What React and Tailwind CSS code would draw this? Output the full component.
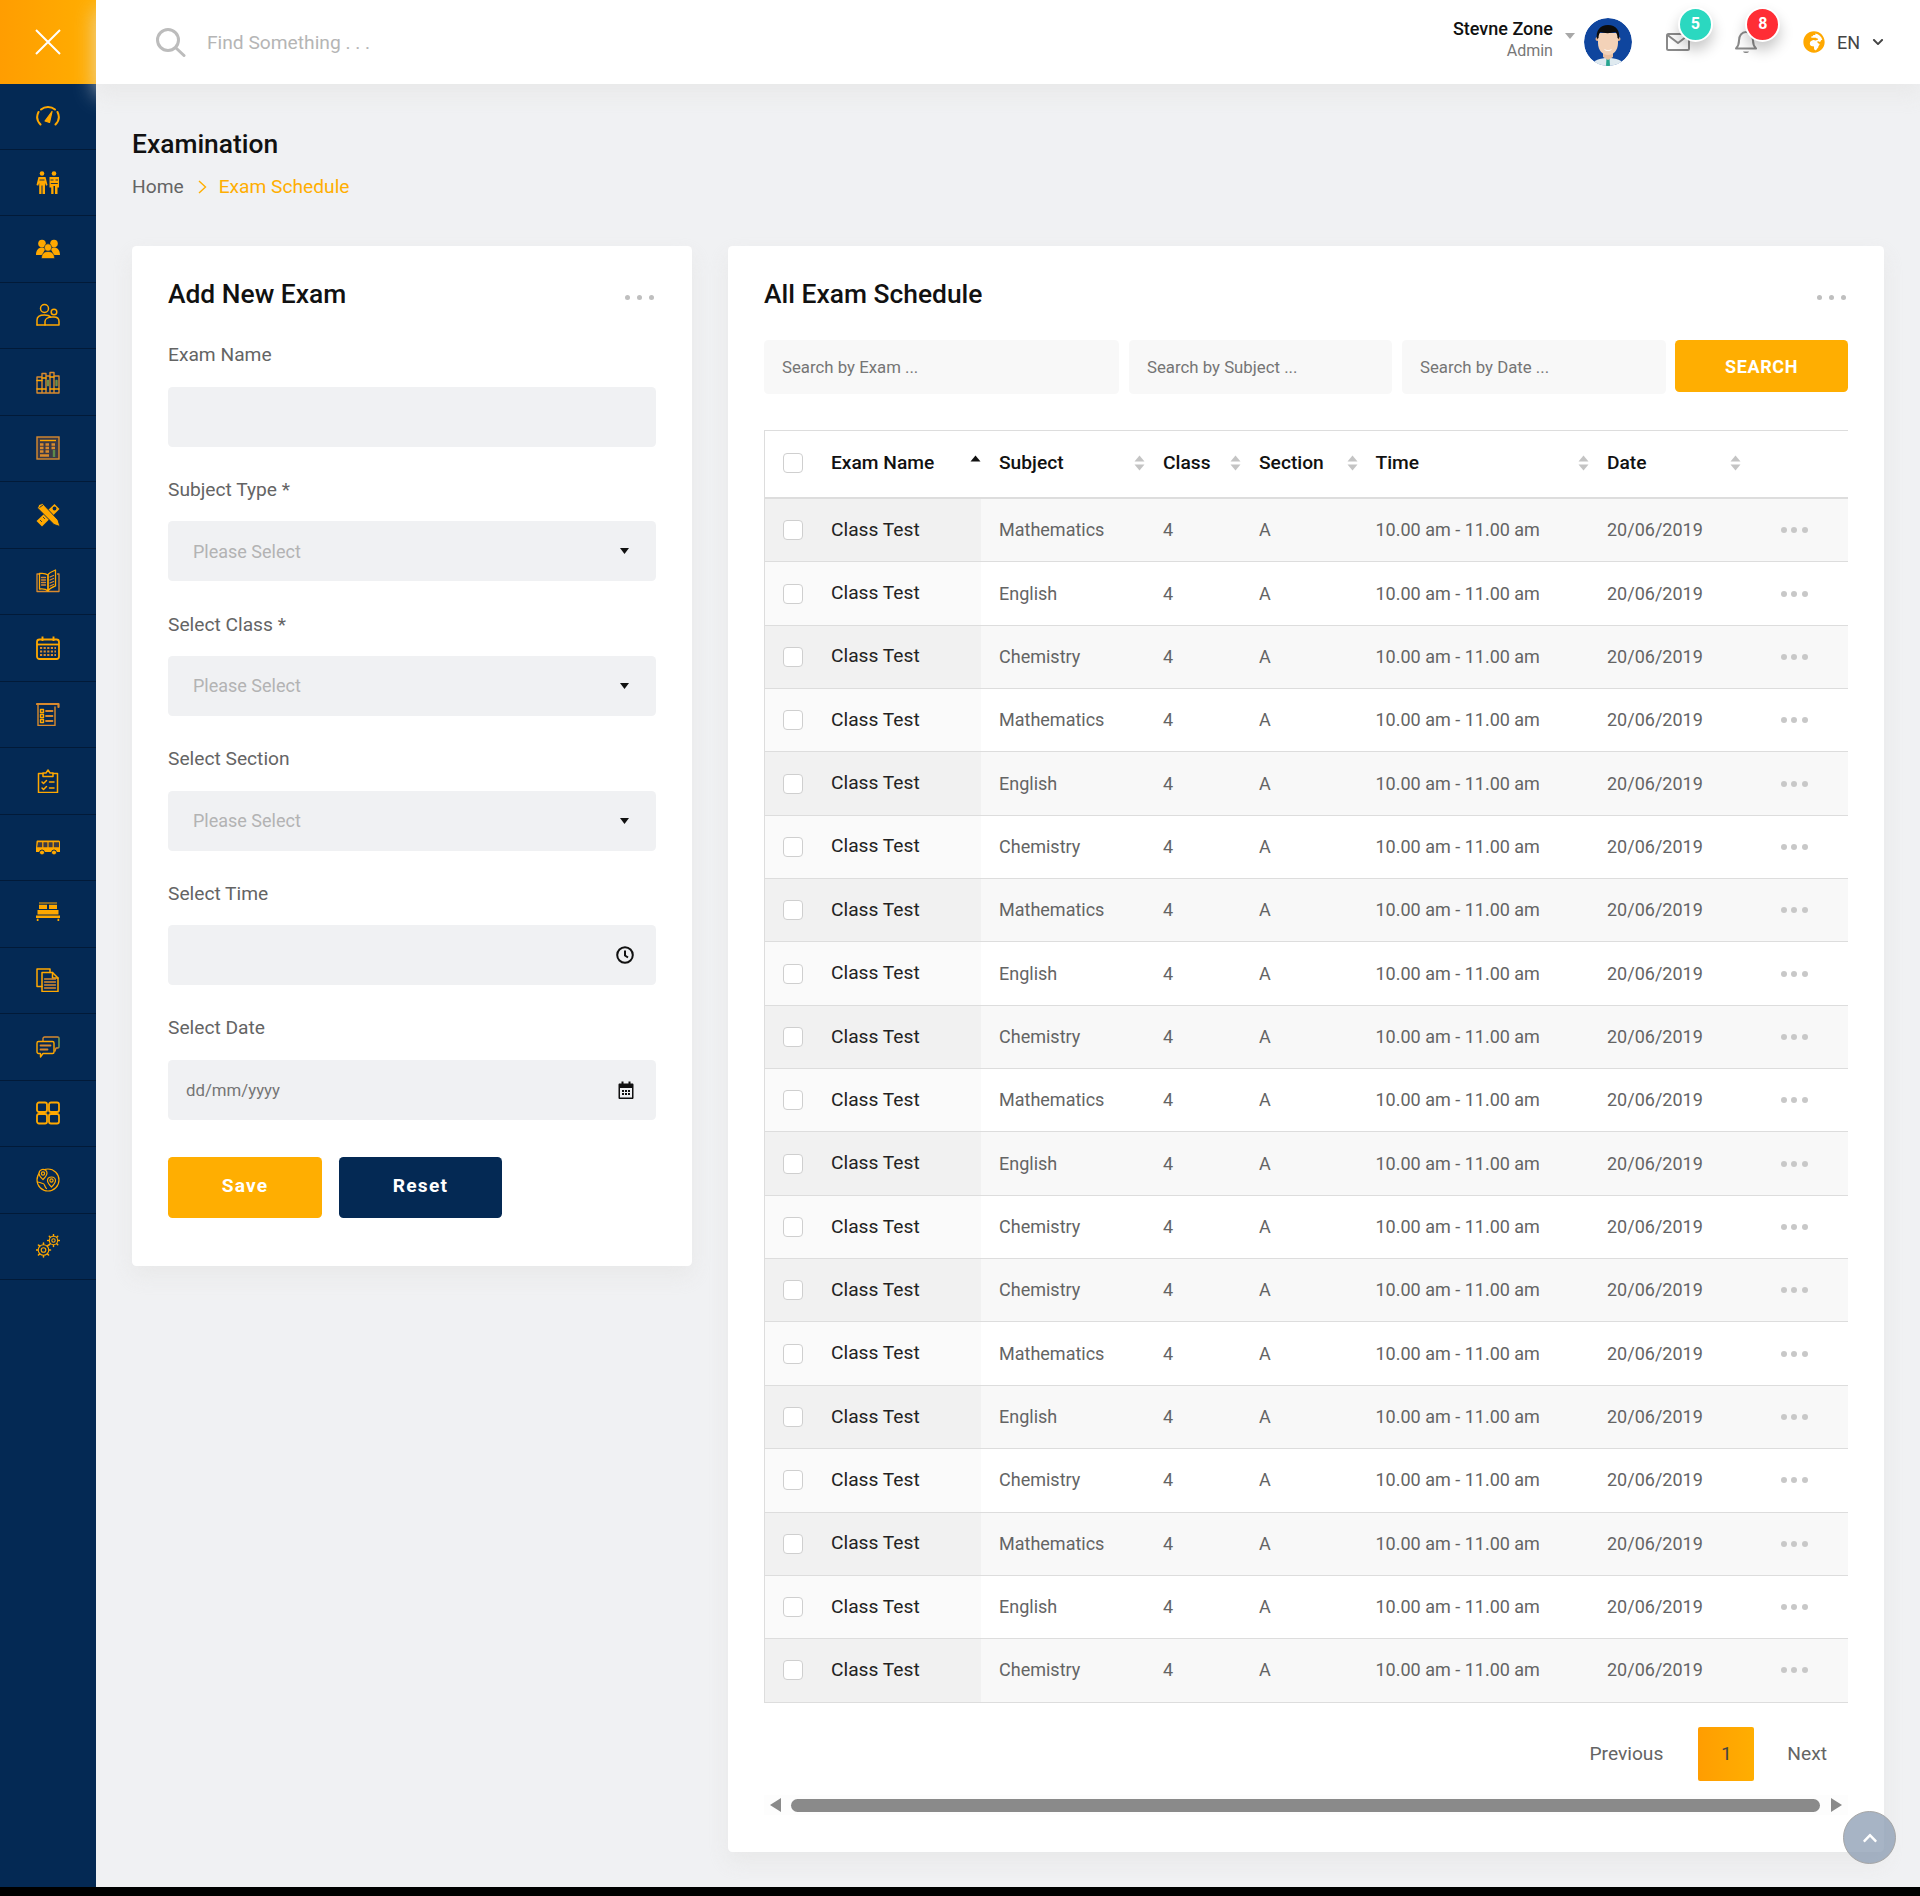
import React from 'react';
import { FaGlobeAfrica, FaChevronDown, FaChevronUp } from 'react-icons/fa';

const subjects = ['Mathematics', 'English', 'Chemistry', 'Mathematics', 'English', 'Chemistry', 'Mathematics', 'English', 'Chemistry', 'Mathematics', 'English', 'Chemistry', 'Chemistry', 'Mathematics', 'English', 'Chemistry', 'Mathematics', 'English', 'Chemistry'];

const O = '#ffa800';
const M = '#d98a2e';

// sidebar icons, all drawn on a 24 box
const Line = ({ children, w = 1.5 }) => (
  <svg viewBox="0 0 24 24" className="w-6 h-6" fill="none" stroke={O} strokeWidth={w} strokeLinecap="round" strokeLinejoin="round">
    {children}
  </svg>
);

const sideIcons = [
  <Line key="gauge" w={2}>
    <path d="M4.500 20.500C1 17 .5 12 2.500 8" />
    <path d="M5 5.500C9 2 15 2 19 5.500" />
    <path d="M21.500 8c2 4 1.500 9-2 12.500" />
    <path d="M9 17l7-9.500-2.500 11z" fill={O} strokeWidth="1.200" />
  </Line>,
  <svg key="students" viewBox="0 0 24 24" className="w-6 h-6" fill={O}>
    <circle cx="6" cy="3.500" r="2.300" />
    <circle cx="18" cy="3.500" r="2.300" />
    <path d="M2.500 7h7l2 8-1.500.8-1-2.800V24H6.500v-8.500h-1V24H3.200V13l-1 2.800L.5 15z" />
    <path d="M13.500 7h9.500v10.500h-1.500V24H19v-8h-1.500v8h-2.300v-6.500h-1.700z" />
    <path d="M3.500 10h5M14.500 10h3M19.500 10h2.500M14.800 13.500h7" stroke="#042954" strokeWidth=".9" />
  </svg>,
  <svg key="group" viewBox="0 0 24 24" className="w-6 h-6" fill={O}>
    <circle cx="6" cy="6.500" r="3.800" />
    <circle cx="18" cy="6.500" r="3.800" />
    <path d="M0 18c0-5 2.500-7.500 6-7.500 1.500 0 3 .5 4 1.500-2 1.500-3 3.500-3 6z" />
    <path d="M24 18c0-5-2.500-7.500-6-7.500-1.500 0-3 .5-4 1.500 2 1.500 3 3.500 3 6z" />
    <circle cx="12" cy="10.500" r="3.700" stroke="#042954" strokeWidth=".6" />
    <path d="M5.500 21.500c0-5 2.500-7 6.500-7s6.500 2 6.500 7z" stroke="#042954" strokeWidth=".6" />
  </svg>,
  <Line key="parents">
    <circle cx="8.500" cy="5.500" r="4" />
    <circle cx="18" cy="9" r="2.800" />
    <path d="M1 22v-5c0-3 2.500-5 7.500-5 3 0 5 .8 6 2" />
    <path d="M9 22v-3.500c0-2.500 3-4.500 7.500-4.500H18c3 0 5 1.500 5 4.500V22z" />
    <path d="M1 22h8" />
  </Line>,
  <Line key="books" w={1.400}>
    <path d="M1 7h5v16H1zM6 3.500h4V23H6zM10 6h4v17h-4zM14 2.500h4V23h-4zM18 6h5v17h-5z" stroke={M} />
    <path d="M1 10.500h5M1 19h5M6 8h4M6 19h4M14 7h4M14 19h4M18 19h5" stroke={O} />
    <path d="M11.500 10.500h1v5h-1zM20 10.500h1v5h-1z" stroke="#6f8f48" />
  </Line>,
  <svg key="calc" viewBox="0 0 24 24" className="w-6 h-6" fill="none" stroke={O} strokeWidth="1.400">
    <rect x="1" y="1" width="22" height="22" stroke={M} fill="#3a3a48" />
    <path d="M4 4.500h16" />
    <path d="M4 8.500h3.500M9.500 8.500H13M15.500 8.500H19M4 12h3.500M9.500 12H13M15.500 12H19M4 15.500h3.500M9.500 15.500H13M4 19.500h9" stroke={M} strokeWidth="2.400" />
    <path d="M18 14v7" stroke="#5d8a4a" strokeWidth="2.400" />
  </svg>,
  <svg key="tools" viewBox="0 0 24 24" className="w-6 h-6" fill={O}>
    <path d="M18.500 1l5 5L6 23.500 .5 18z" />
    <path d="M3 1.500L6.500.5 22 17l2 6.500-6-2L1.500 5z" stroke="#042954" strokeWidth=".9" />
    <circle cx="18.500" cy="5.500" r="1.900" fill="#042954" />
    <path d="M3.500 4.500l3.500-2.500" stroke="#042954" strokeWidth=".9" />
    <path d="M4 17l2 2M7 14l2 2" stroke="#042954" strokeWidth=".8" />
  </svg>,
  <Line key="book" w={1.300}>
    <path d="M3 5H1v17.500h22V5h-1.500" stroke={M} />
    <path d="M12 22V6C10 4.500 7 4 3.500 4.500V20c3.500-.5 6.500 0 8.500 2z" />
    <path d="M12 22V5.500c2.500-2.500 5-3.500 7.500-4.500v16c-2.500 1-5.500 2-7.500 5z" />
    <path d="M5.500 8.500h4M5.500 11h4M5.500 13.500h4M5.500 16h4M14 8l3.500-1.500M14 11l3.500-1.500M14 14l3.500-1.500M14 17l3.500-1.500" stroke={M} />
  </Line>,
  <svg key="calendar" viewBox="0 0 24 24" className="w-6 h-6" fill="none" stroke={O} strokeWidth="1.800">
    <rect x="1" y="3.500" width="22" height="19.500" rx="2.500" />
    <path d="M1 8.500h22" />
    <path d="M6.500 .5v4.500M17.500 .5v4.500" strokeWidth="1.900" />
    <path d="M4 12h16M4 15.500h16M4 19h16" strokeWidth="2.200" strokeDasharray="2.200 1.400" stroke={M} />
  </svg>,
  <Line key="list" w={1.400}>
    <path d="M1 2h21.500V5" stroke={M} strokeWidth="2.200" />
    <path d="M2 3v20.500h17V5" stroke={M} />
    <path d="M4.500 7.500h3v3h-3zM4.500 12.500h3v3h-3zM4.500 17.500h3v3h-3z" />
    <path d="M10 9h6.500M10 14h6.500M10 19h6.500" strokeWidth="1.800" stroke={M} />
  </Line>,
  <Line key="clipboard" w={1.500}>
    <path d="M7 4.500H2.500v19h19v-19H17" />
    <path d="M7 7.500h10V4h-3l-2-3-2 3H7z" />
    <path d="M6 13l1.500 1.500 3-3M6 19l1.500 1.500 3-3" />
    <path d="M13.500 13h4.500M13.500 19h4.500" />
  </Line>,
  <svg key="bus" viewBox="0 0 24 24" className="w-6 h-6">
    <path d="M1.500 5.500h21c.5 0 1.500 .5 1.500 1V17H0v-4l.5-6.500c0-.5.5-1 1-1z" fill={O} />
    <path d="M2 7.200h4.200v5H1.200zM7.400 7.200h4v5h-4zM12.600 7.200h4v5h-4zM17.800 7.200h5.200v5h-5.200z" fill="#3a3a48" />
    <circle cx="6" cy="17.500" r="2.500" fill={O} stroke="#042954" />
    <circle cx="18" cy="17.500" r="2.500" fill={O} stroke="#042954" />
  </svg>,
  <svg key="bed" viewBox="0 0 24 24" className="w-6 h-6" fill={O}>
    <path d="M3 .5h18v1.100H3zM3 2.800h8V7H3zM13 2.800h8V7h-8zM1.500 8h21v4.500h-21zM0 13.500h24V16H0zM.8 16.800h1.700V19H.8zM21.500 16.800h1.700V19h-1.700z" />
  </svg>,
  <Line key="docs" w={1.500}>
    <path d="M14 4.500V1H1v17.500h5" />
    <path d="M6 4.500h10.500L22 10v13.500H6z" />
    <path d="M16.500 4.500V10H22" />
    <path d="M8.500 11h11M8.500 14h11M8.500 17h11M8.500 20h11" strokeWidth="1.300" stroke={M} />
  </Line>,
  <Line key="chat" w={1.400}>
    <path d="M7 6V3.500C7 2.700 7.700 2 8.500 2h13C22.300 2 23 2.700 23 3.500v8c0 .8-.7 1.500-1.500 1.500H20l-1 3" stroke={M} />
    <path d="M23 3v9" stroke="#3d8a5a" />
    <path d="M2.500 6.500h14c.8 0 1.500.7 1.500 1.500v9c0 .8-.7 1.500-1.500 1.500H7L4.500 22v-3.500h-2C1.700 18.500 1 17.800 1 17V8c0-.8.7-1.500 1.500-1.500z" />
    <path d="M4.500 10.500h10M4.500 14.500h7" stroke={M} strokeWidth="1.800" />
  </Line>,
  <Line key="grid" w={1.800}>
    <rect x="1" y="1.500" width="10" height="9.500" rx="2" />
    <rect x="13" y="1.500" width="10" height="9.500" rx="2" />
    <rect x="1" y="13" width="10" height="9.500" rx="2" />
    <rect x="13" y="13" width="10" height="9.500" rx="2" />
  </Line>,
  <Line key="globe" w={1.200}>
    <circle cx="12" cy="12" r="11" />
    <path d="M6 1.500c3-.5 5 1.500 5 3.500S8.500 10 7 11.500C5.500 10 3 8 3 5.500 3 4 4.500 2 6 1.500z" fill="#042954" />
    <circle cx="7" cy="5.500" r="1.600" />
    <path d="M15.500 9c2.500 0 4 1.800 4 3.500s-2.500 5-4 6.500c-1.500-1.500-4-4.500-4-6.500S13 9 15.500 9z" fill="#042954" />
    <circle cx="15.500" cy="12.500" r="1.600" />
    <path d="M1.500 14c2.500 0 3.500 1.500 5.500 1.500S8.500 19.500 10.500 20.500" />
  </Line>,
  <Line key="gears" w={1.100}>
    <circle cx="7.500" cy="16" r="5.300" />
    <circle cx="7.500" cy="16" r="2.300" />
    <path d="M7.500 9v1.200M7.500 21.800V23M.5 16h1.200M13.300 16h1.200M2.500 11l.9.900M11.600 20.100l.9.900M2.500 21l.9-.9M11.600 11.900l.9-.9" strokeWidth="1.600" />
    <circle cx="17.500" cy="6.500" r="4.200" />
    <circle cx="17.500" cy="6.500" r="1.700" />
    <path d="M17.500 .6v1M17.500 11.400v1M11.600 6.500h1M22.400 6.500h1M13.300 2.300l.8.800M20.900 9.900l.8.800M13.300 10.700l.8-.8M20.900 3.100l.8-.8" strokeWidth="1.500" />
  </Line>,
];

const Dots = ({ big }) => (
  <div className={big ? 'flex gap-[7px]' : 'flex gap-[4.5px]'}>
    {[0, 1, 2].map((i) => (
      <span key={i} className={big ? 'w-[5px] h-[5px] rounded-full bg-[#bfbfbf]' : 'w-[6px] h-[6px] rounded-full bg-[#c8c8c8]'} />
    ))}
  </div>
);

const Checkbox = () => <span className="block shrink-0 w-5 h-5 rounded-[4px] bg-white border border-[#cfcfcf]" />;

const SortIcon = ({ active }) => (
  <svg viewBox="0 0 11 18" className="w-[11px] h-[18px] shrink-0">
    <path d="M5.500 1.500L10.500 7.500H.5z" fill={active ? '#111111' : '#c4c4c4'} />
    {!active && <path d="M5.500 16.500L10.500 10.500H.5z" fill="#c4c4c4" />}
  </svg>
);

const Caret = () => (
  <svg viewBox="0 0 9 6" className="w-[9px] h-[6px]">
    <path d="M0 0h9L4.500 6z" fill="#111111" />
  </svg>
);

const Field = ({ label, children, last }) => (
  <div className={last ? '' : 'mb-[31.600px]'}>
    <div className="h-[22px] pt-[2px] mb-[21px] flex items-center text-[19.200px] text-[#646464]">{label}</div>
    <div className="h-[60px] rounded-[4.500px] bg-[#f0f1f3] flex items-center justify-between">{children}</div>
  </div>
);

const SelectBox = () => (
  <>
    <span className="pl-[25px] text-[18px] text-[#b3b3b3]">Please Select</span>
    <span className="pr-[27px] flex"><Caret /></span>
  </>
);

const Avatar = () => (
  <svg viewBox="0 0 48 48" className="w-12 h-12 rounded-full shrink-0">
    <circle cx="24" cy="24" r="24" fill="#0f459e" />
    <path d="M8 48c1-6 8-8 16-8s15 2 16 8z" fill="#dfeaf0" />
    <path d="M22.500 40h3l.5 8h-4z" fill="#27a58f" />
    <path d="M19 32h10v7l-5 3-5-3z" fill="#e9bfa0" />
    <circle cx="13.500" cy="21" r="2" fill="#e2b08c" />
    <circle cx="34.500" cy="21" r="2" fill="#e2b08c" />
    <path d="M14 15h20v10c0 8-5 12-10 12s-10-4-10-12z" fill="#f3d2b8" />
    <path d="M13 21c-1.500-8 3-14 11-14s12.500 6 11 14l-1.500-1c0-3-1-5-2-6-5 1.500-11 1.500-15 0-1 1-2 3-2 6z" fill="#0c0c0c" />
    <path d="M20 31c2.500 1.500 5.500 1.500 8 0-1 2.500-7 2.500-8 0z" fill="#ffffff" />
  </svg>
);

const Badge = ({ className, children }) => (
  <span className={`absolute w-[35px] h-[35px] rounded-full border-2 border-white flex items-center justify-center text-[16px] font-bold text-white shadow-[0_8px_14px_rgba(0,0,0,0.22)] ${className}`}>
    {children}
  </span>
);

const Header = () => (
  <header className="h-[84px] bg-white shadow-[0_10px_20px_rgba(229,229,229,0.75)] flex items-center relative">
    <div className="pl-[59px] flex items-center">
      <svg viewBox="0 0 31 30" className="w-[31px] h-[30px]" fill="none" stroke="#bcbcbc" strokeWidth="3" strokeLinecap="round">
        <circle cx="13" cy="13" r="10.500" />
        <path d="M21 21l8 7.500" />
      </svg>
      <span className="ml-[21px] pt-[2px] text-[19.200px] text-[#b5b5b5]">Find Something . . .</span>
    </div>
    <div className="ml-auto flex items-center pr-[36px]">
      <div className="text-right leading-none pb-[5px]">
        <div className="text-[18px] font-medium text-[#111111]">Stevne Zone</div>
        <div className="mt-[5px] text-[16px] text-[#777777]">Admin</div>
      </div>
      <svg viewBox="0 0 10 6" className="ml-[12px] mb-[12px] w-[10px] h-[6px]">
        <path d="M0 0h10L5 6z" fill="#a8a8a8" />
      </svg>
      <span className="ml-[9px] flex"><Avatar /></span>
      <span className="ml-[34px] relative flex">
        <svg viewBox="0 0 24 18" className="w-6 h-[18px]" fill="none" stroke="#8a8a8a" strokeWidth="2" strokeLinejoin="round">
          <rect x="1" y="1" width="22" height="16" rx="1.500" />
          <path d="M1.500 2L12 10 22.500 2" />
        </svg>
        <Badge className="-top-[26.500px] -right-[23px] bg-[#2bd8c0]">5</Badge>
      </span>
      <span className="ml-[45px] relative flex">
        <svg viewBox="0 0 22 24" className="w-[22px] h-6" fill="none" stroke="#8a8a8a" strokeWidth="2" strokeLinejoin="round">
          <path d="M1 18.500c2-2 3-3.500 3-8C4 5.500 7 2 11 2s7 3.500 7 8.500c0 4.500 1 6 3 8z" />
          <path d="M8 21.500c1 2 5 2 6 0z" fill="#8a8a8a" stroke="none" />
        </svg>
        <Badge className="-top-[23.500px] -right-[23.500px] bg-[#ff2d35]">8</Badge>
      </span>
      <FaGlobeAfrica className="ml-[46px] w-[22px] h-[22px] text-[#ffa800]" />
      <span className="ml-[12px] text-[18px] text-[#444444]">EN</span>
      <FaChevronDown className="ml-[12px] w-[12px] h-[12px] text-[#444444]" />
    </div>
  </header>
);

const Sidebar = () => (
  <aside className="w-[96px] shrink-0 bg-[#042954]">
    <div className="h-[84px] bg-gradient-to-r from-[#ff9d01] to-[#ffae01] flex items-center justify-center">
      <svg viewBox="0 0 26 26" className="w-[26px] h-[26px]" stroke="#ffffff" strokeWidth="2">
        <path d="M1 1l24 24M25 1L1 25" />
      </svg>
    </div>
    <div className="-mt-[1px]">
      {sideIcons.map((icon, i) => (
        <div key={i} className="h-[66.500px] border-b border-[#021a38] flex items-center justify-center">
          {icon}
        </div>
      ))}
    </div>
  </aside>
);

const AddExam = () => (
  <section className="w-[560px] self-start bg-white rounded-[4.500px] shadow-[0_10px_20px_rgba(229,229,229,0.75)] px-9 pt-9 pb-[48px]">
    <div className="h-6 flex items-center justify-between">
      <h3 className="pt-[2px] text-[26.400px] font-medium text-[#111111]">Add New Exam</h3>
      <span className="pr-[2px] mt-[6px]"><Dots big /></span>
    </div>
    <div className="mt-[37.800px]">
      <Field label="Exam Name" />
      <Field label="Subject Type *"><SelectBox /></Field>
      <Field label="Select Class *"><SelectBox /></Field>
      <Field label="Select Section"><SelectBox /></Field>
      <Field label="Select Time">
        <span />
        <svg viewBox="0 0 18 18" className="mr-[22px] w-[18px] h-[18px]" fill="none" stroke="#111111" strokeWidth="2">
          <circle cx="9" cy="9" r="7.800" />
          <path d="M9 4.500V9.500l3 2" />
        </svg>
      </Field>
      <Field label="Select Date" last>
        <span className="pl-[18px] pt-[2px] text-[16.800px] text-[#757575]">dd/mm/yyyy</span>
        <svg viewBox="0 0 16 18" className="mr-[22px] w-4 h-[18px]">
          <path d="M1.500 2.500h2V.5h2v2h5V.5h2v2h2c.5 0 1 .5 1 1V17c0 .5-.5 1-1 1h-13c-.5 0-1-.5-1-1V3.500c0-.5.5-1 1-1zM2 7v9.500h12V7z" fill="#111111" />
          <path d="M4 9h2v2H4zM7 9h2v2H7zM10 9h2v2h-2zM4 12h2v2H4zM7 12h2v2H7zM10 12h2v2h-2z" fill="#111111" />
        </svg>
      </Field>
    </div>
    <div className="mt-[37px] flex gap-[17px]">
      <button className="w-[154px] h-[61px] pb-[2px] rounded-[4.500px] bg-[#ffae01] text-white text-[19.200px] font-bold tracking-[1.200px]">Save</button>
      <button className="w-[163px] h-[61px] pb-[2px] rounded-[4.500px] bg-[#042954] text-white text-[19.200px] font-bold tracking-[1.200px]">Reset</button>
    </div>
  </section>
);

const SearchBox = ({ width, children }) => (
  <div className={`${width} h-[54px] rounded-[4.500px] bg-[#f8f8f8] flex items-center pl-[18px] pt-[2px] text-[16.800px] text-[#757575]`}>{children}</div>
);

const columns = 'grid grid-cols-[216px_164px_96px_116.500px_231.500px_151.500px_1fr]';

const ExamTable = () => (
  <div className="mt-9 border-t border-l border-[#dddddd]">
    <div className={`${columns} h-[68px] pb-[2px] border-b-2 border-[#dddddd] text-[19.200px] font-medium text-[#111111]`}>
      <div className="pl-[18px] flex items-center">
        <Checkbox />
        <span className="ml-7">Exam Name</span>
        <span className="ml-auto flex"><SortIcon active /></span>
      </div>
      {['Subject', 'Class', 'Section', 'Time', 'Date'].map((h) => (
        <div key={h} className="pl-[18px] flex items-center justify-between">
          {h}
          <SortIcon />
        </div>
      ))}
      <div />
    </div>
    {subjects.map((subject, i) => (
      <div key={i} className={`${columns} h-[63.350px] border-b border-[#dddddd] text-[18px] text-[#646464] ${i % 2 === 0 ? 'bg-[#f8f8f8]' : 'bg-white'}`}>
        <div className={`pl-[18px] flex items-center text-[19.200px] text-[#222222] ${i % 2 === 0 ? 'bg-[#f1f1f1]' : 'bg-[#fafafa]'}`}>
          <Checkbox />
          <span className="ml-7">Class Test</span>
        </div>
        <div className="pl-[18px] pb-[1px] flex items-center">{subject}</div>
        <div className="pl-[18px] pb-[1px] flex items-center">4</div>
        <div className="pl-[18px] pb-[1px] flex items-center">A</div>
        <div className="pl-[18px] pb-[1px] flex items-center">10.00 am - 11.00 am</div>
        <div className="pl-[18px] pb-[1px] flex items-center">20/06/2019</div>
        <div className="flex items-center justify-center"><Dots /></div>
      </div>
    ))}
  </div>
);

const ScheduleCard = () => (
  <section className="flex-1 bg-white rounded-[4.500px] shadow-[0_10px_20px_rgba(229,229,229,0.75)] px-9 pt-9 h-[1606px]">
    <div className="h-6 flex items-center justify-between">
      <h3 className="pt-[2px] text-[26.400px] font-medium text-[#111111]">All Exam Schedule</h3>
      <span className="pr-[2px] mt-[6px]"><Dots big /></span>
    </div>
    <div className="mt-[34px] flex items-start">
      <SearchBox width="w-[355px]">Search by Exam ...</SearchBox>
      <div className="w-[10px]" />
      <SearchBox width="w-[263px]">Search by Subject ...</SearchBox>
      <div className="w-[10px]" />
      <SearchBox width="w-[264px]">Search by Date ...</SearchBox>
      <button className="ml-[9px] flex-1 h-[52px] pt-[1px] rounded-[4.500px] bg-[#ffae01] text-white text-[18px] font-bold tracking-[0.600px]">SEARCH</button>
    </div>
    <ExamTable />
    <div className="mt-[24.500px] h-[54px] flex items-center justify-end pr-[21px] text-[19.200px] text-[#646464]">
      <span>Previous</span>
      <span className="ml-[35px] mr-[33px] w-[56px] h-[54px] rounded-[2px] bg-gradient-to-r from-[#ff9d01] to-[#ffae01] flex items-center justify-center text-[#444444]">1</span>
      <span>Next</span>
    </div>
    <div className="mt-[14px] h-[20px] bg-[#fdfdfd] flex items-center">
      <svg viewBox="0 0 11 14" className="ml-[6px] w-[11px] h-[14px]"><path d="M11 0v14L0 7z" fill="#8a8a8a" /></svg>
      <span className="ml-[10px] flex-1 h-[13px] rounded-full bg-[#8a8a8a]" />
      <svg viewBox="0 0 11 14" className="ml-[11px] mr-[6px] w-[11px] h-[14px]"><path d="M0 0v14l11-7z" fill="#8a8a8a" /></svg>
    </div>
  </section>
);

export default function App() {
  return (
    <div className="min-h-screen bg-black font-['Roboto',sans-serif]">
      <div className="h-[1887px] flex bg-[#f0f1f3] relative overflow-hidden">
        <Sidebar />
        <div className="flex-1 min-w-0">
          <Header />
          <main className="px-9">
            <h1 className="pt-[45px] h-[77px] text-[26.400px] font-medium text-[#111111] leading-[30px]">Examination</h1>
            <div className="mt-[14px] h-[24px] flex items-center text-[19.200px]">
              <span className="text-[#646464]">Home</span>
              <svg viewBox="0 0 9 14" className="ml-[14px] w-[9px] h-[14px]" fill="none" stroke="#ffae01" strokeWidth="1.400"><path d="M1 1l6.500 6L1 13" /></svg>
              <span className="ml-[12px] text-[#ffae01]">Exam Schedule</span>
            </div>
            <div className="mt-[47px] flex gap-9 items-start">
              <AddExam />
              <ScheduleCard />
            </div>
          </main>
        </div>
        <button className="absolute left-[1843px] top-[1811px] w-[53px] h-[53px] rounded-full bg-[#8a9bb2]/75 border border-[#a5a5a5] flex items-center justify-center">
          <FaChevronUp className="w-4 h-4 text-white" />
        </button>
      </div>
    </div>
  );
}
